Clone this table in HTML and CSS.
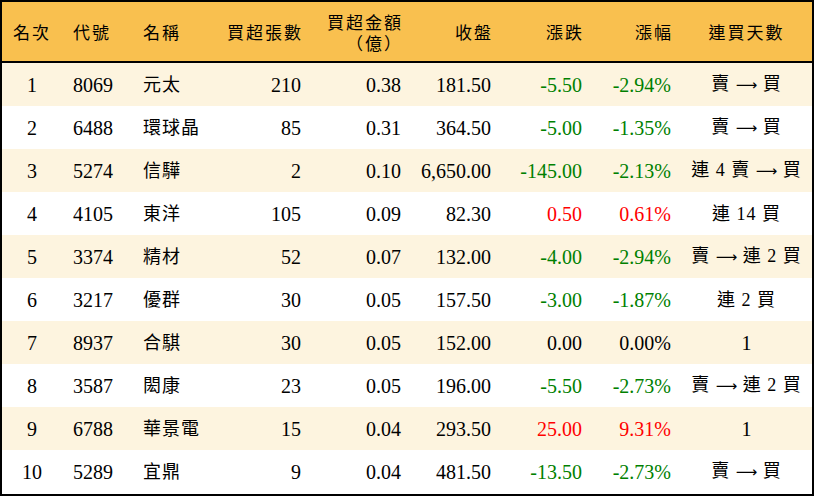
FILE: index.html
```html
<!DOCTYPE html>
<html lang="zh-Hant">
<head>
<meta charset="utf-8">
<link rel="stylesheet" href="styles.css">
</head>
<body>
<div class="board">
<table class="grid">
<colgroup>
<col class="c-rank"><col class="c-code"><col class="c-name"><col class="c-vol"><col class="c-amt"><col class="c-close"><col class="c-chg"><col class="c-pct"><col class="c-days">
</colgroup>
<thead>
<tr>
<th class="ctr">名次</th>
<th class="lft">代號</th>
<th class="lft">名稱</th>
<th class="rgt">買超張數</th>
<th class="rgt two"><span class="ln">買超金額</span><span class="ln">（億）</span></th>
<th class="rgt">收盤</th>
<th class="rgt">漲跌</th>
<th class="rgt">漲幅</th>
<th class="ctr">連買天數</th>
</tr>
</thead>
<tbody>
<tr class="odd"><td class="ctr">1</td><td class="lft">8069</td><td class="lft cjk">元太</td><td class="rgt">210</td><td class="rgt">0.38</td><td class="rgt">181.50</td><td class="rgt dn">-5.50</td><td class="rgt dn">-2.94%</td><td class="ctr cjk">賣 <span class="arr">⟶</span> 買</td></tr>
<tr><td class="ctr">2</td><td class="lft">6488</td><td class="lft cjk">環球晶</td><td class="rgt">85</td><td class="rgt">0.31</td><td class="rgt">364.50</td><td class="rgt dn">-5.00</td><td class="rgt dn">-1.35%</td><td class="ctr cjk">賣 <span class="arr">⟶</span> 買</td></tr>
<tr class="odd"><td class="ctr">3</td><td class="lft">5274</td><td class="lft cjk">信驊</td><td class="rgt">2</td><td class="rgt">0.10</td><td class="rgt">6,650.00</td><td class="rgt dn">-145.00</td><td class="rgt dn">-2.13%</td><td class="ctr cjk">連 4 賣 <span class="arr">⟶</span> 買</td></tr>
<tr><td class="ctr">4</td><td class="lft">4105</td><td class="lft cjk">東洋</td><td class="rgt">105</td><td class="rgt">0.09</td><td class="rgt">82.30</td><td class="rgt up">0.50</td><td class="rgt up">0.61%</td><td class="ctr cjk">連 14 買</td></tr>
<tr class="odd"><td class="ctr">5</td><td class="lft">3374</td><td class="lft cjk">精材</td><td class="rgt">52</td><td class="rgt">0.07</td><td class="rgt">132.00</td><td class="rgt dn">-4.00</td><td class="rgt dn">-2.94%</td><td class="ctr cjk">賣 <span class="arr">⟶</span> 連 2 買</td></tr>
<tr><td class="ctr">6</td><td class="lft">3217</td><td class="lft cjk">優群</td><td class="rgt">30</td><td class="rgt">0.05</td><td class="rgt">157.50</td><td class="rgt dn">-3.00</td><td class="rgt dn">-1.87%</td><td class="ctr cjk">連 2 買</td></tr>
<tr class="odd"><td class="ctr">7</td><td class="lft">8937</td><td class="lft cjk">合騏</td><td class="rgt">30</td><td class="rgt">0.05</td><td class="rgt">152.00</td><td class="rgt">0.00</td><td class="rgt">0.00%</td><td class="ctr">1</td></tr>
<tr><td class="ctr">8</td><td class="lft">3587</td><td class="lft cjk">閎康</td><td class="rgt">23</td><td class="rgt">0.05</td><td class="rgt">196.00</td><td class="rgt dn">-5.50</td><td class="rgt dn">-2.73%</td><td class="ctr cjk">賣 <span class="arr">⟶</span> 連 2 買</td></tr>
<tr class="odd"><td class="ctr">9</td><td class="lft">6788</td><td class="lft cjk">華景電</td><td class="rgt">15</td><td class="rgt">0.04</td><td class="rgt">293.50</td><td class="rgt up">25.00</td><td class="rgt up">9.31%</td><td class="ctr">1</td></tr>
<tr><td class="ctr">10</td><td class="lft">5289</td><td class="lft cjk">宜鼎</td><td class="rgt">9</td><td class="rgt">0.04</td><td class="rgt">481.50</td><td class="rgt dn">-13.50</td><td class="rgt dn">-2.73%</td><td class="ctr cjk">賣 <span class="arr">⟶</span> 買</td></tr>
</tbody>
</table>
</div>
</body>
</html>
```

FILE: styles.css
```css
html, body {
  margin: 0;
  padding: 0;
  background: #ffffff;
}

.board {
  width: 814px;
  height: 496px;
  box-sizing: border-box;
  border: 2px solid #000;
  overflow: hidden;
  font-family: "Liberation Serif", "Noto Sans CJK TC", serif;
  color: #000;
}

.grid {
  width: 810px;
  border-collapse: collapse;
  table-layout: fixed;
}

.c-rank { width: 60px; }
.c-code { width: 70px; }
.c-name { width: 80px; }
.c-vol { width: 99px; }
.c-amt { width: 100px; }
.c-close { width: 90px; }
.c-chg { width: 91px; }
.c-pct { width: 89px; }
.c-days { width: 131px; }

.grid th {
  background: #f9c04f;
  height: 59px;
  border-bottom: 2px solid #000;
  font-weight: normal;
  font-size: 17px;
  letter-spacing: 2px;
  padding: 0;
  line-height: 21px;
  font-family: "Noto Sans CJK TC", "Liberation Serif", sans-serif;
}

.grid td {
  height: 43px;
  padding: 0;
  font-size: 20px;
  line-height: 22px;
  white-space: nowrap;
}

.grid tr.odd td {
  background: #fdf4df;
}

.ctr { text-align: center; }
.lft { text-align: left; padding-left: 11px !important; }
.rgt { text-align: right; padding-right: 10px !important; }

.grid th.rgt { padding-right: 8px !important; }
.grid th.lft { padding-left: 11px !important; }

.two .ln {
  display: block;
}

.cjk {
  font-size: 18px !important;
  letter-spacing: 1px;
}

.arr {
  font-family: "DejaVu Sans", sans-serif;
  font-size: 15px;
  letter-spacing: 0;
}

.dn { color: #008000; }
.up { color: #ff0000; }
```
